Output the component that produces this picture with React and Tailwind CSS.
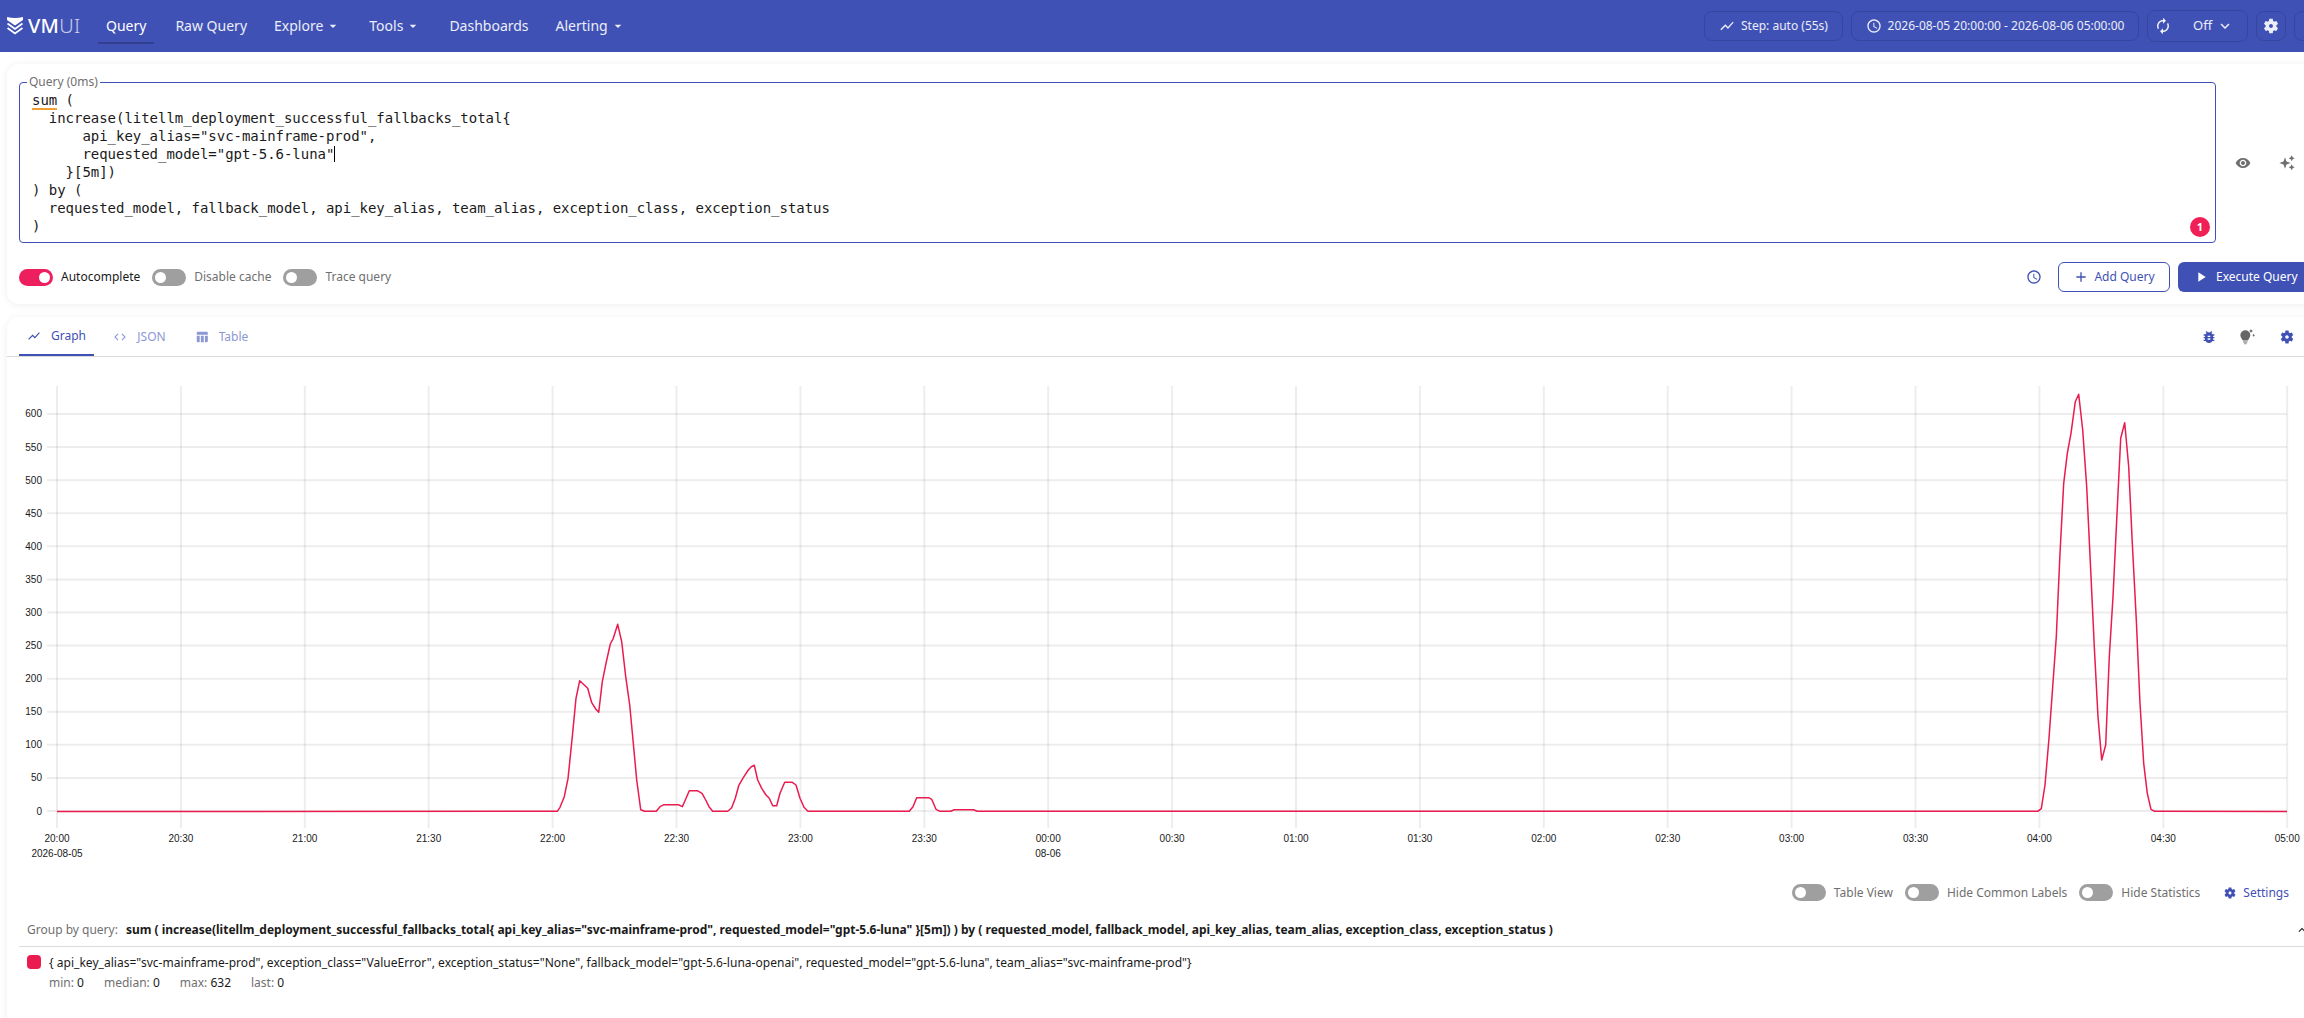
import React from 'react';

const FONT = 'font-["Noto_Sans",sans-serif]';

const icons = {
  chart: 'M3.5 18.49l6-6.01 4 4L22 6.92l-1.41-1.41-7.09 7.97-4-4L2 16.99z',
  clock: 'M11.99 2C6.47 2 2 6.48 2 12s4.47 10 9.99 10C17.52 22 22 17.52 22 12S17.52 2 11.99 2zM12 20c-4.42 0-8-3.58-8-8s3.58-8 8-8 8 3.58 8 8-3.58 8-8 8zM12.5 7H11v6l5.25 3.15.75-1.23-4.5-2.67z',
  renew: 'M12 6v3l4-4-4-4v3c-4.42 0-8 3.58-8 8 0 1.57.46 3.03 1.24 4.26L6.7 14.8c-.45-.83-.7-1.79-.7-2.8 0-3.31 2.69-6 6-6zm6.76 1.74L17.3 9.2c.44.84.7 1.79.7 2.8 0 3.31-2.69 6-6 6v-3l-4 4 4 4v-3c4.42 0 8-3.58 8-8 0-1.57-.46-3.03-1.24-4.26z',
  gear: 'M19.14 12.94c.04-.3.06-.61.06-.94 0-.32-.02-.64-.07-.94l2.03-1.58c.18-.14.23-.41.12-.61l-1.92-3.32c-.12-.22-.37-.29-.59-.22l-2.39.96c-.5-.38-1.03-.7-1.62-.94l-.36-2.54c-.04-.24-.24-.41-.48-.41h-3.84c-.24 0-.43.17-.47.41l-.36 2.54c-.59.24-1.13.57-1.62.94l-2.39-.96c-.22-.08-.47 0-.59.22L2.74 8.87c-.12.21-.08.47.12.61l2.03 1.58c-.05.3-.09.63-.09.94s.02.64.07.94l-2.03 1.58c-.18.14-.23.41-.12.61l1.92 3.32c.12.22.37.29.59.22l2.39-.96c.5.38 1.03.7 1.62.94l.36 2.54c.05.24.24.41.48.41h3.84c.24 0 .44-.17.47-.41l.36-2.54c.59-.24 1.13-.56 1.62-.94l2.39.96c.22.08.47 0 .59-.22l1.92-3.32c.12-.22.07-.47-.12-.61l-2.01-1.58zM12 14.6c-1.43 0-2.6-1.17-2.6-2.6s1.17-2.6 2.6-2.6 2.6 1.17 2.6 2.6-1.17 2.6-2.6 2.6z',
  eye: 'M12 4.5C7 4.5 2.73 7.61 1 12c1.73 4.39 6 7.5 11 7.5s9.27-3.11 11-7.5c-1.73-4.39-6-7.5-11-7.5zM12 17c-2.76 0-5-2.24-5-5s2.24-5 5-5 5 2.24 5 5-2.24 5-5 5zm0-8c-1.66 0-3 1.34-3 3s1.34 3 3 3 3-1.34 3-3-1.34-3-3-3z',
  sparkle: 'M9 3.5l2.2 6.3 6.3 2.2-6.3 2.2L9 20.5l-2.2-6.3L.5 12l6.3-2.2zM19 .5l1.5 3 3 1.5-3 1.5-1.5 3-1.5-3-3-1.5 3-1.5zM19 14l1.5 3 3 1.5-3 1.5-1.5 3-1.5-3-3-1.5 3-1.5z',
  bug: 'M20 8h-2.81c-.45-.78-1.07-1.45-1.82-1.96L17 4.41 15.59 3l-2.17 2.17C12.96 5.06 12.49 5 12 5c-.49 0-.96.06-1.41.17L8.41 3 7 4.41l1.62 1.63C7.88 6.55 7.26 7.22 6.81 8H4v2h2.09c-.05.33-.09.66-.09 1v1H4v2h2v1c0 .34.04.67.09 1H4v2h2.81c1.04 1.79 2.97 3 5.19 3s4.15-1.21 5.19-3H20v-2h-2.09c.05-.33.09-.66.09-1v-1h2v-2h-2v-1c0-.34-.04-.67-.09-1H20V8zm-6 8h-4v-2h4v2zm0-4h-4v-2h4v2z',
  code: 'M9.4 16.6 4.8 12l4.6-4.6L8 6l-6 6 6 6 1.4-1.4zm5.2 0 4.6-4.6-4.6-4.6L16 6l6 6-6 6-1.4-1.4z',
  table: 'M10 10.02h5V21h-5zM17 21h3c1.1 0 2-.9 2-2v-9h-5v11zm3-18H5c-1.1 0-2 .9-2 2v3h19V5c0-1.1-.9-2-2-2zM3 19c0 1.1.9 2 2 2h3V10H3v9z',
  play: 'M8 5v14l11-7z',
  plus: 'M19 13h-6v6h-2v-6H5v-2h6V5h2v6h6v2z',
  caret: 'M7 10l5 5 5-5z',
  down: 'M7.41 8.59 12 13.17l4.59-4.58L18 10l-6 6-6-6 1.41-1.41z',
  up: 'M7.41 15.41 12 10.83l4.59 4.58L18 14l-6-6-6 6z',
};

const Icon = ({ name, className }) => (
  <svg viewBox="0 0 24 24" fill="currentColor" className={className}>
    <path d={icons[name]} />
  </svg>
);

const Bulb = () => (
  <svg viewBox="0 0 24 24" className="h-4 w-4">
    <path d="M2 9.5a7.5 7.5 0 0 1 15 0c0 3-2.2 4.7-3 7H5c-.8-2.3-3-4-3-7z" fill="#666666" />
    <path d="M5.5 16.5h8l-1.5 5a2.6 2.6 0 0 1-5 0z" fill="#b0b0b0" />
    <path d="M18 0l1 2 2 1-2 1-1 2-1-2-2-1 2-1zM22 7l.8 1.7 1.2.8-1.2.8L22 12l-.8-1.7-1.2-.8 1.2-.8z" fill="#666666" />
  </svg>
);

const Toggle = ({ on, label }) => (
  <div className="flex items-center gap-2">
    <div className={`flex h-[17px] w-[34px] items-center rounded-full px-[3px] ${on ? 'justify-end bg-[#ee1f5f]' : 'justify-start bg-[#a09f9f]'}`}>
      <div className="h-[11px] w-[11px] rounded-full bg-white" />
    </div>
    <span className={on ? 'text-[#1a1a1a]' : 'text-[#706f6f]'}>{label}</span>
  </div>
);

// coordinates traced off the chart, mapped back to page pixels
const ridgeA = [[0,694],[52,694],[60,682],[73,650],[84,596],[97,470],[108,355],[119,302],[143,325],[155,368],[167,387],[176,397],[187,305],[198,250],[211,192],[220,175],[233,133],[245,185],[257,290],[269,375],[280,490],[290,600],[302,689],[314,694],[349,694],[360,680],[372,674],[415,674],[427,680],[436,660],[448,632],[472,632],[486,640],[497,660],[507,680],[518,694],[563,694],[575,683],[586,655],[596,617],[610,593],[625,570],[634,560],[643,556],[653,600],[665,625],[678,645],[688,655],[698,677],[710,677],[720,640],[734,607],[757,607],[768,615],[780,655],[792,682],[804,694],[1108,694],[1119,680],[1130,653],[1166,653],[1175,658],[1188,688],[1200,694],[1232,694],[1243,689],[1300,689],[1312,694],[1440,694]];
const ridgeB = [[0,1324],[113,1324],[124,1316],[135,1245],[147,1105],[158,950],[169,800],[180,550],[191,340],[202,250],[213,190],[226,95],[236,73],[248,180],[260,350],[272,600],[283,830],[294,1040],[305,1170],[317,1125],[328,860],[339,680],[350,450],[362,205],[374,158],[386,290],[397,520],[409,750],[420,1000],[431,1180],[442,1270],[453,1318],[464,1324]];

const linePoints = [
  [57, 811.5],
  ...ridgeA.map(([x, y]) => [540 + x / 3, 580 + y / 3]),
  ...ridgeB.map(([x, y]) => [2000 + x / 3, 370 + y / 3]),
  [2287, 811.5],
].map(([x, y]) => `${x.toFixed(1)},${(y - 372).toFixed(1)}`).join(' ');

const xTicks = ['20:00','20:30','21:00','21:30','22:00','22:30','23:00','23:30','00:00','00:30','01:00','01:30','02:00','02:30','03:00','03:30','04:00','04:30','05:00'];
const yTicks = [0,50,100,150,200,250,300,350,400,450,500,550,600];

const Chart = () => (
  <svg width="2304" height="500" className="block font-['Liberation_Sans',sans-serif]">
    {xTicks.map((t, i) => {
      const x = 57 + i * 123.9;
      return (
        <g key={t}>
          <line x1={x} x2={x} y1="14" y2="456" stroke="rgba(0,0,0,0.07)" strokeWidth="2" />
          <text x={x} y="470" fontSize="10" textAnchor="middle" fill="#1a1a1a">{t}</text>
        </g>
      );
    })}
    {yTicks.map((v) => {
      const y = 439 - v * 0.6617;
      return (
        <g key={v}>
          <line x1="47" x2="2287" y1={y} y2={y} stroke="rgba(0,0,0,0.07)" strokeWidth="2" />
          <text x="42" y={y + 3.5} fontSize="10" textAnchor="end" fill="#1a1a1a">{v}</text>
        </g>
      );
    })}
    <text x="57" y="485" fontSize="10" textAnchor="middle" fill="#1a1a1a">2026-08-05</text>
    <text x="1048" y="485" fontSize="10" textAnchor="middle" fill="#1a1a1a">08-06</text>
    <polyline points={linePoints} fill="none" stroke="#e91b4f" strokeWidth="1.5" strokeLinejoin="round" />
  </svg>
);

const Nav = ({ label, caret, active, className = '' }) => (
  <div className={`relative flex h-[52px] items-center gap-0.5 px-2 text-sm ${active ? '' : 'text-white/90'} ${className}`}>
    <span>{label}</span>
    {caret && <Icon name="caret" className="h-4 w-4" />}
    {active && <div className="absolute bottom-2 left-0 right-0 h-0.5 bg-[#32408f]" />}
  </div>
);

const HeadBtn = ({ children, className = '' }) => (
  <div className={`flex h-[30px] items-center rounded-lg border border-[#36459f] text-xs text-white/90 ${className}`}>{children}</div>
);

export default function App() {
  return (
    <div className={`h-[1018px] w-[2304px] overflow-hidden bg-white text-xs text-[#1a1a1a] ${FONT}`}>
      <div className="w-[2340px]">
        <header className="flex h-[52px] items-center bg-[#3f51b5] text-white">
          <div className="ml-[7px] flex w-[91px] items-center gap-[5px]">
            <svg viewBox="0 0 16 18" className="h-[18px] w-4" fill="none" stroke="white" strokeWidth="1.8">
              <path d="M0 0c5 1.2 11 1.2 16 0v3l-8 5.5L0 3z" fill="white" stroke="none" />
              <path d="M.5 6.5 8 12l7.5-5.5M.5 11 8 16.5 15.5 11" />
            </svg>
            <span className="text-[20px] font-medium leading-none tracking-[0.3px]">VM<span className="font-light opacity-70">UI</span></span>
          </div>
          <Nav label="Query" active />
          <Nav label="Raw Query" className="ml-[13px]" />
          <Nav label="Explore" caret className="ml-[11px]" />
          <Nav label="Tools" caret className="ml-3" />
          <Nav label="Dashboards" className="ml-3" />
          <Nav label="Alerting" caret className="ml-[11px]" />
          <div className="ml-auto flex items-center gap-2 pr-4">
            <HeadBtn className="w-[139px] justify-center gap-[6px]"><Icon name="chart" className="h-4 w-4" />Step: auto (55s)</HeadBtn>
            <HeadBtn className="w-[288px] justify-center gap-[6px]"><Icon name="clock" className="h-4 w-4" />2026-08-05 20:00:00 - 2026-08-06 05:00:00</HeadBtn>
            <HeadBtn className="h-[32px] w-[101px] pl-[6px]">
              <Icon name="renew" className="h-[18px] w-[18px]" />
              <span className="ml-[21px] text-[13px]">Off</span>
              <Icon name="down" className="ml-1 h-[18px] w-[18px]" />
            </HeadBtn>
            <HeadBtn className="w-[30px] justify-center"><Icon name="gear" className="h-[18px] w-[18px]" /></HeadBtn>
            <HeadBtn className="w-[30px]" />
          </div>
        </header>

        <div className="flex flex-col gap-[13px] pl-[7px] pt-3">
          <section className="h-[240px] rounded-xl bg-white py-3 pl-3 pr-[22px] pt-[18px] shadow-[0_1px_8px_rgba(0,0,0,0.07)]">
            <div className="flex items-center">
              <div className="relative h-[161px] w-[2197px] rounded border border-[#3f51b5] px-3 pt-2">
                <span className="absolute -top-[9px] left-[7px] bg-white px-0.5 text-[#706f6f]">Query (0ms)</span>
                <pre className="font-['DejaVu_Sans_Mono',monospace] text-sm leading-[18px] tracking-[-0.03px] text-[#1a1a1a]">
                  <span className="border-b-2 border-[#f0a030]">sum</span>{' (\n'}
                  {'  increase(litellm_deployment_successful_fallbacks_total{\n'}
                  {'      api_key_alias="svc-mainframe-prod",\n'}
                  {'      requested_model="gpt-5.6-luna"'}<span className="border-r border-black" />{'\n'}
                  {'    }[5m])\n'}
                  {') by (\n'}
                  {'  requested_model, fallback_model, api_key_alias, team_alias, exception_class, exception_status\n'}
                  {')'}
                </pre>
                <div className="absolute bottom-[5px] right-[5px] flex h-5 w-5 items-center justify-center rounded-full bg-[#f01f55] text-[11px] font-bold text-white">1</div>
              </div>
              <div className="ml-[19px] flex items-center gap-[28px] text-[#706f6f]">
                <Icon name="eye" className="h-4 w-4" />
                <Icon name="sparkle" className="h-4 w-4" />
              </div>
            </div>
            <div className="mt-[19px] flex items-center">
              <div className="flex gap-3">
                <Toggle on label="Autocomplete" />
                <Toggle label="Disable cache" />
                <Toggle label="Trace query" />
              </div>
              <div className="ml-auto flex items-center text-[#3f51b5]">
                <Icon name="clock" className="mr-4 h-4 w-4" />
                <div className="flex h-[30px] w-[112px] items-center justify-center gap-[5px] rounded-md border border-[#3f51b5]"><Icon name="plus" className="h-4 w-4" />Add Query</div>
                <div className="ml-2 flex h-[30px] w-[140px] items-center gap-[7px] rounded-md bg-[#3f51b5] pl-[15px] text-white"><Icon name="play" className="h-4 w-4" />Execute Query</div>
              </div>
            </div>
          </section>

          <section className="h-[720px] rounded-xl bg-white shadow-[0_1px_8px_rgba(0,0,0,0.07)]">
            <div className="flex h-[40px] items-stretch border-b border-[#dbdbdb] pl-3 pr-[45px]">
              <div className="flex w-[75px] items-center justify-center gap-2.5 border-b-2 border-[#3f51b5] text-[#3f51b5]"><Icon name="chart" className="h-3.5 w-3.5" />Graph</div>
              <div className="ml-2 flex w-[75px] items-center justify-center gap-2.5 text-[#8c97d3]"><Icon name="code" className="h-3.5 w-3.5" />JSON</div>
              <div className="ml-[7px] flex w-[75px] items-center justify-center gap-2.5 text-[#8c97d3]"><Icon name="table" className="h-3.5 w-3.5" />Table</div>
              <div className="ml-auto flex items-center text-[#3f51b5]">
                <Icon name="bug" className="mr-[22px] h-4 w-4" />
                <Bulb />
                <Icon name="gear" className="ml-6 h-4 w-4" />
              </div>
            </div>
            <div className="-ml-[7px] mt-[15px]"><Chart /></div>
            <div className="mt-2 flex h-[25px] w-[2282px] items-center justify-end gap-3 text-[#706f6f]">
              <Toggle label="Table View" />
              <Toggle label="Hide Common Labels" />
              <Toggle label="Hide Statistics" />
              <div className="ml-[11px] flex items-center gap-1.5 text-[#3f51b5]"><Icon name="gear" className="h-3.5 w-3.5" />Settings</div>
            </div>
            <div className="ml-3 mt-[15px] flex h-[27px] w-[2290px] items-center gap-2 border-b border-[#dbdbdb] pb-1.5 pl-2">
              <span className="text-[#706f6f]">Group by query:</span>
              <b>{'sum ( increase(litellm_deployment_successful_fallbacks_total{ api_key_alias="svc-mainframe-prod", requested_model="gpt-5.6-luna" }[5m]) ) by ( requested_model, fallback_model, api_key_alias, team_alias, exception_class, exception_status )'}</b>
              <Icon name="up" className="ml-auto h-3.5 w-3.5" />
            </div>
            <div className="ml-5 mt-2 flex gap-2">
              <div className="h-3.5 w-3.5 rounded-sm bg-[#e91b4f]" />
              <div>
                <div className="tracking-[0.03px]">{'{ api_key_alias="svc-mainframe-prod", exception_class="ValueError", exception_status="None", fallback_model="gpt-5.6-luna-openai", requested_model="gpt-5.6-luna", team_alias="svc-mainframe-prod"}'}</div>
                <div className="mt-[4px] flex gap-5 text-[#706f6f]">
                  <span>min: <span className="text-[#1a1a1a]">0</span></span>
                  <span>median: <span className="text-[#1a1a1a]">0</span></span>
                  <span>max: <span className="text-[#1a1a1a]">632</span></span>
                  <span>last: <span className="text-[#1a1a1a]">0</span></span>
                </div>
              </div>
            </div>
          </section>
        </div>
      </div>
    </div>
  );
}
